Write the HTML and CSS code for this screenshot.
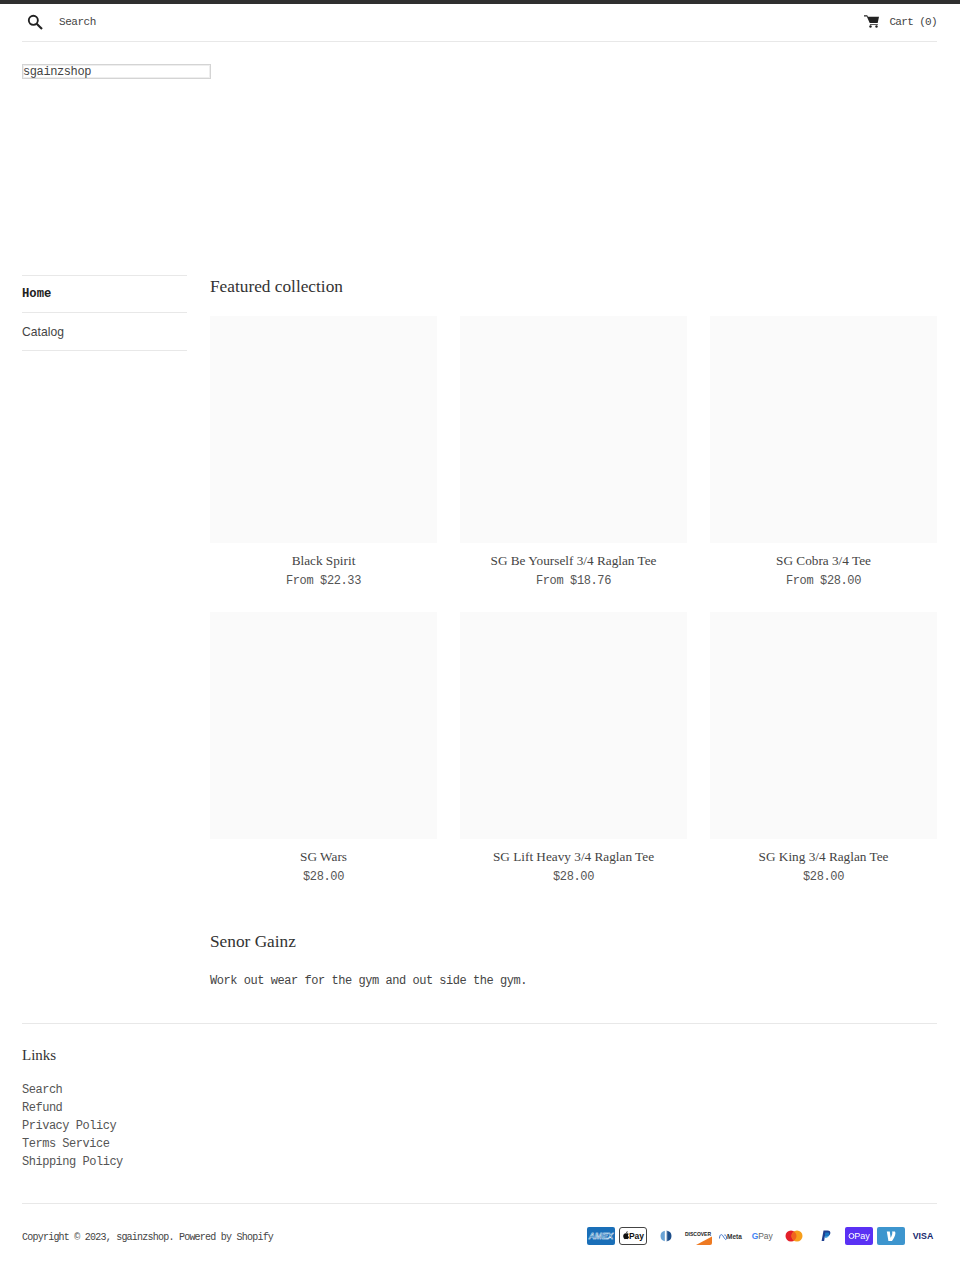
FILE: index.html
```html
<!DOCTYPE html>
<html lang="en">
<head>
<meta charset="utf-8">
<title>sgainzshop</title>
<link rel="stylesheet" href="styles.css">
</head>
<body>
<div class="topbar"></div>
<div class="page">
  <header class="header">
    <a class="search">
      <svg class="search-icon" viewBox="0 0 24 24" width="16" height="16"><circle cx="9.500" cy="9.500" r="6.800" fill="none" stroke="#222" stroke-width="2.800"/><path d="M14.500 14.500 22.500 22.500" stroke="#222" stroke-width="3.200" fill="none"/></svg>
      <span>Search</span>
    </a>
    <a class="cart">
      <svg class="cart-icon" viewBox="0 0 15 13" width="15" height="13"><path d="M0 .2h3.200l.7 1.600H15l-1.300 6.200H5.700L2.800 1.400H0z" fill="#222"/><path d="M5.800 9h8v.8h-7.700z" fill="#222"/><circle cx="6.500" cy="11.500" r="1.200" fill="#222"/><circle cx="12.500" cy="11.500" r="1.200" fill="#222"/></svg>
      <span>Cart (0)</span>
    </a>
  </header>
  <div class="logo-box">sgainzshop</div>
  <div class="layout">
    <nav class="side">
      <a class="side-link active">Home</a>
      <a class="side-link">Catalog</a>
    </nav>
    <main class="main">
      <h2 class="title">Featured collection</h2>
      <div class="grid">
        <div class="product"><div class="thumb"></div><div class="name">Black Spirit</div><div class="price">From $22.33</div></div>
        <div class="product"><div class="thumb"></div><div class="name">SG Be Yourself 3/4 Raglan Tee</div><div class="price">From $18.76</div></div>
        <div class="product"><div class="thumb"></div><div class="name">SG Cobra 3/4 Tee</div><div class="price">From $28.00</div></div>
        <div class="product"><div class="thumb"></div><div class="name">SG Wars</div><div class="price">$28.00</div></div>
        <div class="product"><div class="thumb"></div><div class="name">SG Lift Heavy 3/4 Raglan Tee</div><div class="price">$28.00</div></div>
        <div class="product"><div class="thumb"></div><div class="name">SG King 3/4 Raglan Tee</div><div class="price">$28.00</div></div>
      </div>
      <h2 class="title about">Senor Gainz</h2>
      <p class="about-text">Work out wear for the gym and out side the gym.</p>
    </main>
  </div>
  <footer class="footer">
    <h3 class="foot-title">Links</h3>
    <ul class="foot-links">
      <li>Search</li><li>Refund</li><li>Privacy Policy</li><li>Terms Service</li><li>Shipping Policy</li>
    </ul>
    <div class="foot-bottom">
      <span class="copy">Copyright © 2023, sgainzshop. Powered by Shopify</span>
      <div class="pays">
        <svg class="pay" viewBox="0 0 28 18"><rect width="28" height="18" rx="2" fill="#1a6fb8"/><text x="14" y="12" class="t" font-size="8.500" font-weight="700" font-style="italic" fill="#1a6fb8" stroke="#fff" stroke-width=".4">AMEX</text></svg>
        <svg class="pay" viewBox="0 0 28 18"><rect x=".5" y=".5" width="27" height="17" rx="2.500" fill="#fff" stroke="#444"/><text x="17.500" y="12.400" class="t" font-size="8.500" font-weight="700" fill="#111">Pay</text><path d="M7.200 6.400c.9-.4 2-.3 2.600.5-1.200.8-1 2.500.3 3-.4 1.200-1.200 2.500-2.200 2.200-.6-.2-1-.2-1.600 0-1 .3-2-1.500-2.100-2.900-.1-2 1.700-3.100 3-2.800zM7.100 6c0-1 .7-1.700 1.600-1.800 0 1-.7 1.700-1.600 1.800z" fill="#111"/></svg>
        <svg class="pay" viewBox="0 0 28 18"><rect width="28" height="18" rx="2" fill="#fff"/><path d="M12.800 3.800A5.300 5.300 0 0 0 12.800 14.200z" fill="#6aa3d5"/><path d="M15.200 3.800A5.300 5.300 0 0 1 15.200 14.200z" fill="#1c4e8a"/><path d="M14 3.400h1.200v11.200H14z" fill="#1c4e8a" opacity=".3"/></svg>
        <svg class="pay" viewBox="0 0 28 18"><rect width="28" height="18" rx="2" fill="#fff"/><path d="M12 18 28 9.500V16a2 2 0 0 1-2 2z" fill="#ee7a22"/><text x="14" y="8.800" class="t" font-size="5" font-weight="700" fill="#222">DISCOVER</text></svg>
        <svg class="pay" viewBox="0 0 28 18"><rect width="28" height="18" rx="2" fill="#fff"/><path d="M3.500 11.500c0-4 2-5 3.500-2.500s3 5 3.500 2.500c.3-2.500-1-4-2.200-3.500" fill="none" stroke="#2b66c4" stroke-width=".9"/><text x="18.500" y="11.500" class="t" font-size="6.500" font-weight="700" fill="#333">Meta</text></svg>
        <svg class="pay" viewBox="0 0 28 18"><rect width="28" height="18" rx="2" fill="#fff"/><text x="7" y="12" class="t" font-size="8.500" font-weight="700" fill="#4285f4">G</text><text x="17.500" y="12" class="t" font-size="8.500" fill="#666">Pay</text></svg>
        <svg class="pay" viewBox="0 0 28 18"><rect width="28" height="18" rx="2" fill="#fff"/><circle cx="11" cy="9" r="5.500" fill="#e3202a"/><circle cx="17" cy="9" r="5.500" fill="#f79e1b"/><path d="M14 4.400a5.500 5.500 0 0 1 0 9.200 5.500 5.500 0 0 1 0-9.200z" fill="#f0641e"/></svg>
        <svg class="pay" viewBox="0 0 28 18"><rect width="28" height="18" rx="2" fill="#fff"/><path d="M11.500 3.500h4c2.200 0 3.200 1.300 2.800 3-.4 2-2 3-4 3h-1.500l-.7 4.500H9.600z" fill="#1f3f8f"/><path d="M13.200 5.500h3.200c1.500.4 1.500 4.500-2.200 5.500h-1.300l-.5 3z" fill="#1a8fd8" opacity=".7"/></svg>
        <svg class="pay" viewBox="0 0 28 18"><rect width="28" height="18" rx="2" fill="#5a31f4"/><circle cx="6.500" cy="9" r="2.500" fill="none" stroke="#fff" stroke-width="1"/><text x="17" y="12" class="t" font-size="9" fill="#fff">Pay</text></svg>
        <svg class="pay" viewBox="0 0 28 18"><rect width="28" height="18" rx="2" fill="#3d95ce"/><path d="M9.800 4.500l3 .1.800 6.100c.8-1.300 1.700-3.400 1.700-4.800 0-.6-.1-1-.3-1.300l2.900-.2c.3.500.5 1.100.5 1.900 0 2.400-1.900 5.500-3.400 7.700h-3.600z" fill="#fff"/></svg>
        <svg class="pay" viewBox="0 0 28 18"><rect width="28" height="18" rx="2" fill="#fff"/><text x="14" y="12.200" class="t" font-size="8.800" font-weight="700" fill="#172a6e">VISA</text></svg>
      </div>
    </div>
  </footer>
</div>
</body>
</html>
```
FILE: styles.css
```css
* { box-sizing: border-box; }
html, body { margin: 0; padding: 0; }
body {
  background: #fff;
  color: #333;
  font-family: "Liberation Mono", "DejaVu Sans Mono", monospace;
  font-size: 12px;
  height: 1268px;
  overflow: hidden;
}
.topbar { height: 4px; background: #2f2f2f; }
.page { padding: 0 23px 0 22px; }
.header {
  display: flex;
  justify-content: space-between;
  align-items: center;
  height: 38px;
  padding-bottom: 2px;
  border-bottom: 1px solid #e8e8e8;
  font-size: 11px;
  letter-spacing: -.45px;
}
.search, .cart { display: flex; align-items: center; color: #444; }
.search-icon { margin-left: 5px; margin-right: 16px; margin-top: 1px; }
.cart-icon { margin-right: 10px; }
.cart span { letter-spacing: -.65px; }
.logo-box {
  width: 189px;
  height: 15px;
  margin-top: 22px;
  border: 1px solid #d4d4d4;
  box-shadow: inset 0 0 0 1px #eee;
  font-size: 12px;
  letter-spacing: -.4px;
  line-height: 14px;
  color: #444;
  white-space: nowrap;
}
.layout { display: flex; margin-top: 195px; }
.side { width: 165px; flex: none; margin: 1px 23px 0 0; }
.side-link {
  display: flex;
  align-items: center;
  height: 38px;
  border-bottom: 1px solid #e8e8e8;
  font-family: "Liberation Sans", Arial, sans-serif;
  font-size: 12.100px;
  letter-spacing: .05px;
  color: #444;
}
.side-link.active {
  border-top: 1px solid #e8e8e8;
  font-family: "Liberation Mono", monospace;
  font-weight: 700;
  font-size: 12.200px;
  color: #222;
}
.main { width: 727px; flex: none; }
.title {
  margin: 0;
  padding-top: 1px;
  font-family: "Liberation Serif", "Times New Roman", serif;
  font-weight: 400;
  font-size: 17.300px;
  line-height: 24px;
  color: #333;
}
.grid {
  display: grid;
  grid-template-columns: repeat(3, 227px);
  column-gap: 23px;
  row-gap: 21px;
  margin-top: 17px;
}
.thumb { height: 227px; background: #fafafa; }
.name {
  margin-top: 8px;
  text-align: center;
  font-family: "Liberation Serif", "Times New Roman", serif;
  font-size: 13.250px;
  line-height: 19px;
  color: #444;
}
.price {
  margin-top: 2px;
  text-align: center;
  font-size: 12px;
  letter-spacing: -.38px;
  line-height: 19px;
  color: #555;
}
.about { margin-top: 42px; }
.about-text {
  margin: 17px 0 0;
  font-size: 12px;
  letter-spacing: -.455px;
  line-height: 20px;
  color: #444;
}
.footer { margin-top: 32px; border-top: 1px solid #e8e8e8; }
.foot-title {
  margin: 21px 0 0;
  font-family: "Liberation Serif", serif;
  font-weight: 400;
  font-size: 15px;
  line-height: 20px;
  color: #333;
}
.foot-links {
  list-style: none;
  margin: 16px 0 0;
  padding: 0;
  font-size: 12px;
  letter-spacing: -.48px;
  line-height: 18px;
  color: #555;
}
.foot-bottom {
  display: flex;
  justify-content: space-between;
  align-items: center;
  margin-top: 32px;
  border-top: 1px solid #e8e8e8;
  padding-top: 23px;
}
.copy { font-size: 10px; letter-spacing: -.77px; color: #444; position: relative; top: 1px; }
.pays { display: flex; gap: 4.200px; }
.pay { width: 28px; height: 18px; display: block; }
.t { text-anchor: middle; font-family: "Liberation Sans", Arial, sans-serif; }
```
